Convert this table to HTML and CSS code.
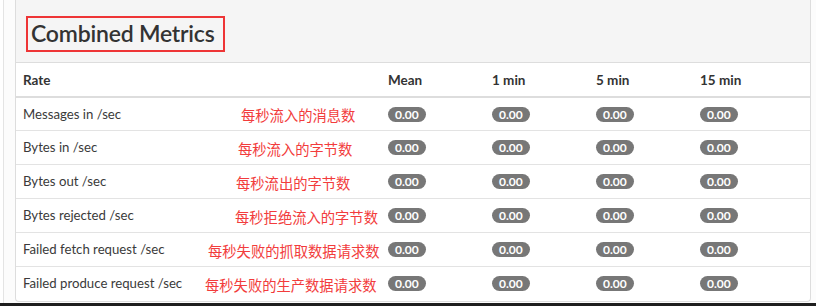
FILE: index.html
```html
<!DOCTYPE html>
<html lang="en">
<head>
<meta charset="utf-8">
<title>Combined Metrics</title>
<link rel="stylesheet" href="styles.css">
</head>
<body>
<div class="page">
  <div class="frame">
    <section class="panel">
      <div class="panel-heading">
        <h3 class="title">Combined Metrics</h3>
      </div>
      <table class="metrics">
        <colgroup>
          <col class="c-rate"><col class="c-num"><col class="c-num"><col class="c-num"><col class="c-last">
        </colgroup>
        <thead>
          <tr><th>Rate</th><th>Mean</th><th>1 min</th><th>5 min</th><th>15 min</th></tr>
        </thead>
        <tbody>
          <tr>
            <td><div class="rate"><span class="label">Messages in /sec</span><span class="note n1">每秒流入的消息数</span></div></td>
            <td><span class="badge">0.00</span></td><td><span class="badge">0.00</span></td><td><span class="badge">0.00</span></td><td><span class="badge">0.00</span></td>
          </tr>
          <tr>
            <td><div class="rate"><span class="label">Bytes in /sec</span><span class="note n2">每秒流入的字节数</span></div></td>
            <td><span class="badge">0.00</span></td><td><span class="badge">0.00</span></td><td><span class="badge">0.00</span></td><td><span class="badge">0.00</span></td>
          </tr>
          <tr>
            <td><div class="rate"><span class="label">Bytes out /sec</span><span class="note n3">每秒流出的字节数</span></div></td>
            <td><span class="badge">0.00</span></td><td><span class="badge">0.00</span></td><td><span class="badge">0.00</span></td><td><span class="badge">0.00</span></td>
          </tr>
          <tr>
            <td><div class="rate"><span class="label">Bytes rejected /sec</span><span class="note n4">每秒拒绝流入的字节数</span></div></td>
            <td><span class="badge">0.00</span></td><td><span class="badge">0.00</span></td><td><span class="badge">0.00</span></td><td><span class="badge">0.00</span></td>
          </tr>
          <tr>
            <td><div class="rate"><span class="label">Failed fetch request /sec</span><span class="note n5">每秒失败的抓取数据请求数</span></div></td>
            <td><span class="badge">0.00</span></td><td><span class="badge">0.00</span></td><td><span class="badge">0.00</span></td><td><span class="badge">0.00</span></td>
          </tr>
          <tr>
            <td><div class="rate"><span class="label">Failed produce request /sec</span><span class="note n6">每秒失败的生产数据请求数</span></div></td>
            <td><span class="badge">0.00</span></td><td><span class="badge">0.00</span></td><td><span class="badge">0.00</span></td><td><span class="badge">0.00</span></td>
          </tr>
        </tbody>
      </table>
    </section>
  </div>
  <div class="bottom-strip"></div>
</div>
</body>
</html>
```
FILE: styles.css
```css
html, body {
  margin: 0;
  padding: 0;
  background: #ffffff;
}
body {
  font-family: Lato, "Noto Sans", "Noto Sans CJK SC", sans-serif;
  color: #333333;
  width: 816px;
  height: 306px;
  overflow: hidden;
}
.page {
  display: flex;
  flex-direction: column;
  height: 306px;
}
.frame {
  flex: 1;
  margin-left: 3px;
  border-left: 1px solid #e4e4e4;
  padding-left: 11px;
  padding-right: 5px;
  background: #fcfcfc;
}
.panel {
  background: #ffffff;
  border: 1px solid #dddddd;
  border-top: none;
  border-radius: 0 0 4px 4px;
  height: 302px;
  box-sizing: border-box;
}
.panel-heading {
  background: #f5f5f5;
  border-bottom: 1px solid #dddddd;
  height: 63px;
  box-sizing: border-box;
  padding: 16px 0 0 10px;
}
.title {
  margin: 0;
  display: inline-block;
  border: 2px solid #ee3536;
  height: 36px;
  width: 199px;
  box-sizing: border-box;
  padding: 0 0 0 3px;
  font-size: 23px;
  font-weight: 600;
  line-height: 31px;
  letter-spacing: -0.2px;
  color: #333333;
  white-space: nowrap;
}
.metrics {
  width: 100%;
  border-collapse: collapse;
  table-layout: fixed;
  font-size: 13.2px;
}
.c-rate { width: 365px; }
.c-num { width: 104px; }
.metrics th {
  text-align: left;
  font-weight: 700;
  font-size: 13.5px;
  height: 34px;
  padding: 0 8px 0 7px;
  border-bottom: 2px solid #dddddd;
  box-sizing: border-box;
}
.metrics td {
  height: 34px;
  padding: 0 8px 0 7px;
  border-top: 1px solid #e3e3e3;
  box-sizing: border-box;
  vertical-align: middle;
  color: #3a3a3a;
}
.metrics tbody tr:first-child td {
  border-top: none;
  height: 33px;
}
.rate {
  display: flex;
  align-items: center;
}
.label {
  flex: 0 0 180px;
  white-space: nowrap;
}
.note {
  font-family: "Noto Sans CJK SC", sans-serif;
  font-size: 14.3px;
  color: #f23c3c;
  white-space: nowrap;
  padding-top: 2px;
}
.n1 { margin-left: 38px; }
.n2 { margin-left: 35px; }
.n3 { margin-left: 33px; }
.n4 { margin-left: 32px; }
.n5 { margin-left: 5px; }
.n6 { margin-left: 2px; }
.badge {
  display: inline-block;
  background: #777777;
  color: #ffffff;
  font-size: 12px;
  font-weight: 700;
  line-height: 15px;
  padding: 0 7px;
  border-radius: 9px;
}
.bottom-strip {
  height: 3px;
  background: #1e1e1e;
}
```
